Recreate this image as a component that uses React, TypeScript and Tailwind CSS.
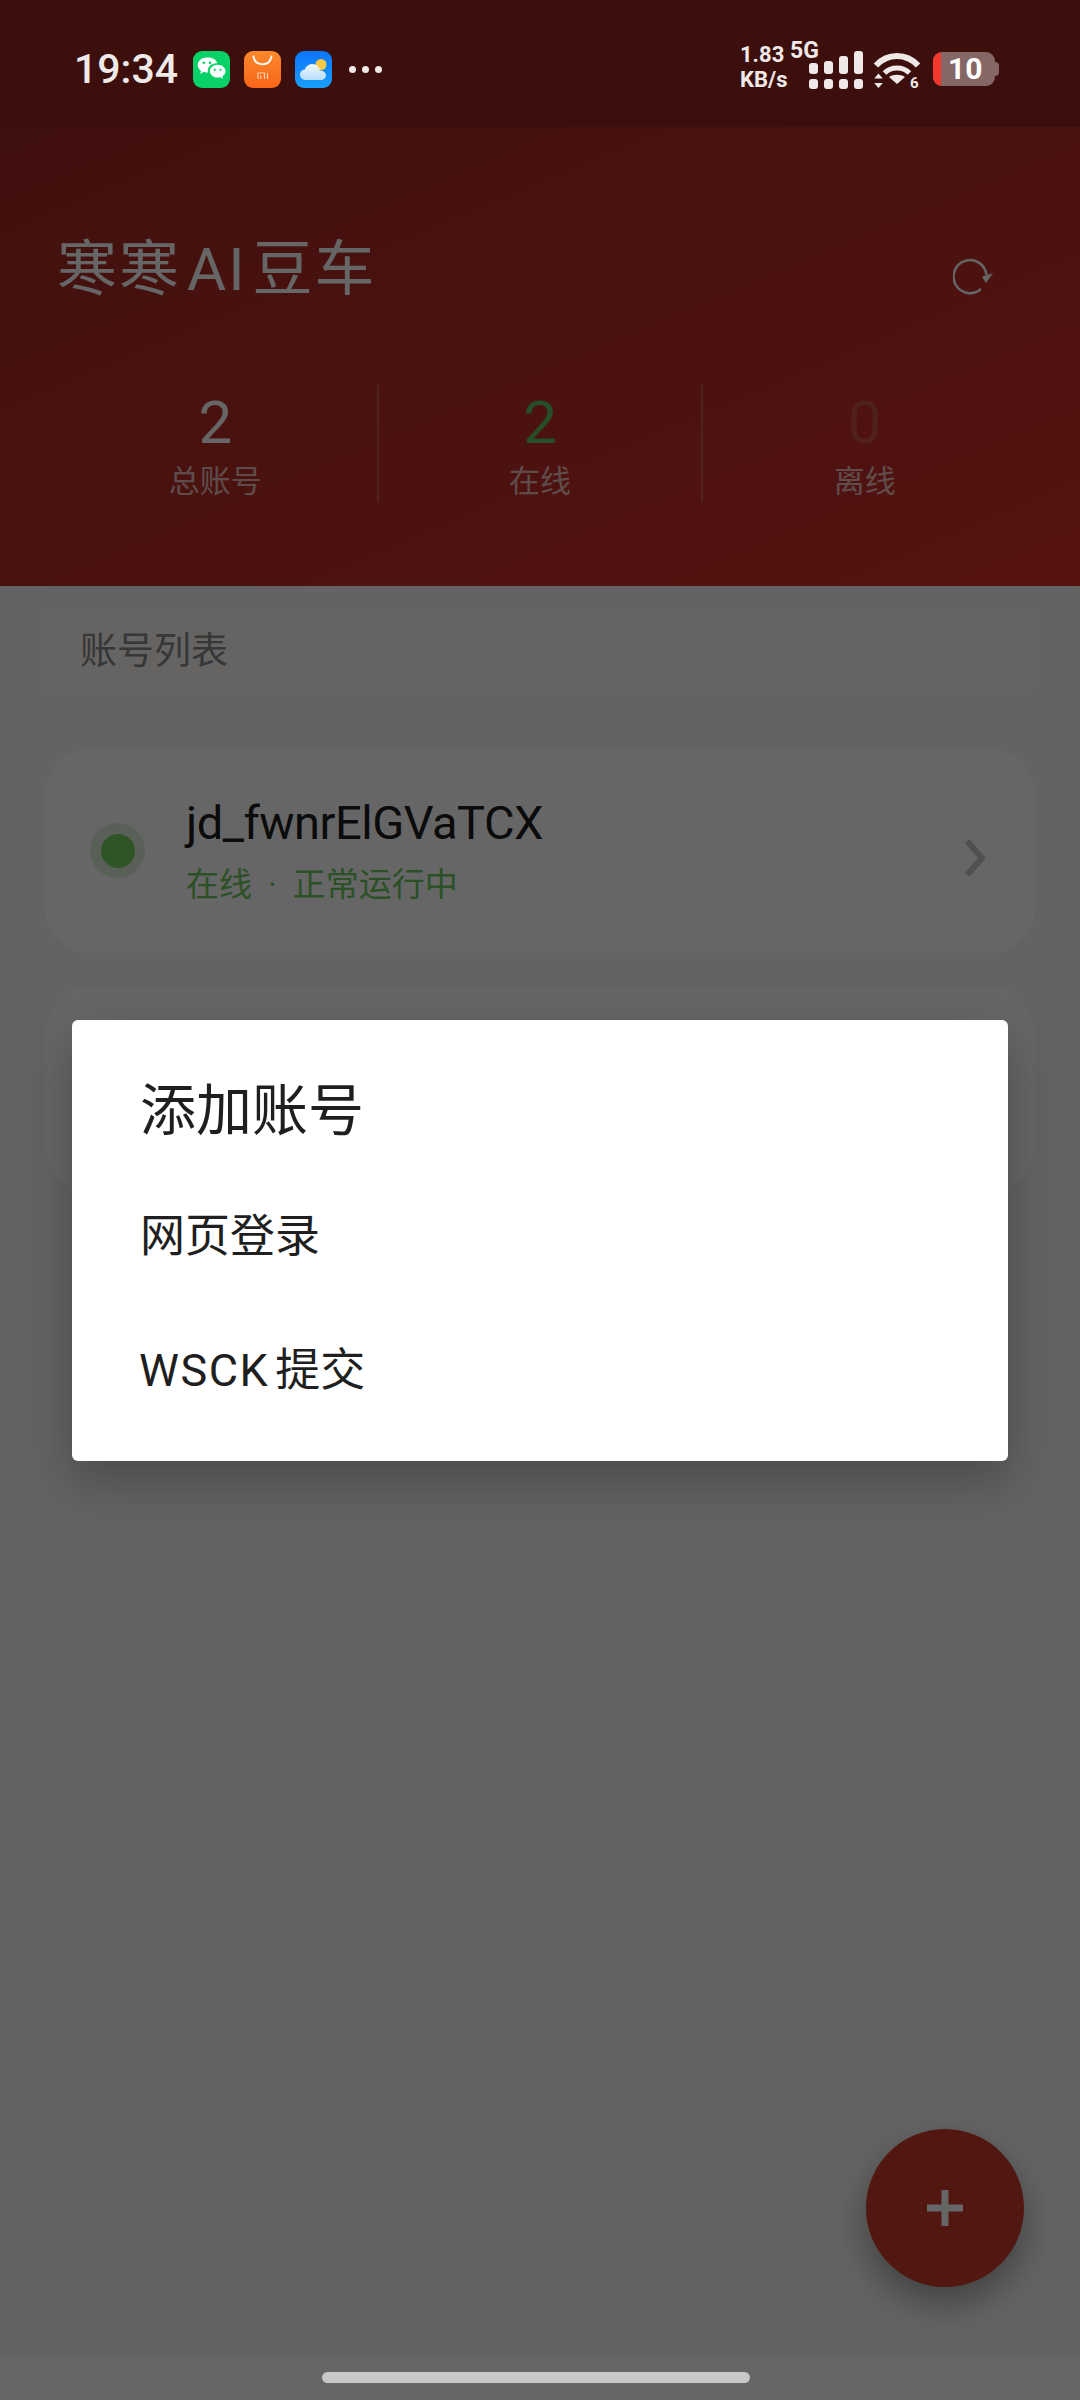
const cjk = "font-['Roboto','Noto_Sans_CJK_SC',sans-serif]";

function WeChatIcon() {
  return (
    <svg width="37" height="37" viewBox="0 0 37 37">
      <rect width="37" height="37" rx="9" fill="#08d267" />
      <path d="M14 6.500c-5.200 0-9.300 3.400-9.300 7.600 0 2.400 1.300 4.400 3.400 5.800l-.9 3 3.300-1.800c1.100.3 2.200.5 3.500.5.400 0 .8 0 1.100-.1-.2-.7-.3-1.300-.3-2 0-4.100 3.900-7.300 8.600-7.300h.9c-.9-3.300-4.600-5.700-9.300-5.700z" fill="#fff" />
      <path d="M32.500 20.200c0-3.500-3.500-6.400-7.800-6.400s-7.800 2.900-7.800 6.400 3.500 6.400 7.800 6.400c.9 0 1.800-.1 2.700-.4l2.700 1.500-.7-2.400c1.900-1.200 3.100-3 3.100-5.100z" fill="#fff" />
      <circle cx="10.800" cy="11.800" r="1.300" fill="#08d267" />
      <circle cx="17" cy="11.800" r="1.300" fill="#08d267" />
      <circle cx="21.800" cy="18.800" r="1.100" fill="#08d267" />
      <circle cx="27.400" cy="18.800" r="1.100" fill="#08d267" />
    </svg>
  );
}

function StoreIcon() {
  return (
    <svg width="37" height="37" viewBox="0 0 37 37">
      <defs>
        <linearGradient id="store" x1="0" y1="0" x2="0" y2="1">
          <stop offset="0" stopColor="#fb8a2c" />
          <stop offset="1" stopColor="#f9651a" />
        </linearGradient>
      </defs>
      <rect width="37" height="37" rx="9" fill="url(#store)" />
      <path d="M9.500 5.500c.8 5 4.400 7.800 9 7.800s8.200-2.800 9-7.800" fill="none" stroke="#fff" strokeWidth="1.800" strokeLinecap="round" />
      <path d="M14 28v-6h6.500v6M16.800 24.500V28M23.500 22v6" fill="none" stroke="#fdd0a8" strokeWidth="1.200" />
    </svg>
  );
}

function WeatherIcon() {
  return (
    <svg width="37" height="37" viewBox="0 0 37 37">
      <defs>
        <linearGradient id="sky" x1="0" y1="0" x2="0" y2="1">
          <stop offset="0" stopColor="#0c74fb" />
          <stop offset="1" stopColor="#19a0fb" />
        </linearGradient>
        <linearGradient id="cloud" x1="0" y1="0" x2="0" y2="1">
          <stop offset="0" stopColor="#f0f6fc" />
          <stop offset="1" stopColor="#b7def9" />
        </linearGradient>
      </defs>
      <rect width="37" height="37" rx="9" fill="url(#sky)" />
      <circle cx="26" cy="13.500" r="5.500" fill="#f9c846" />
      <path d="M10.500 29c-3.200 0-5.500-2.300-5.500-5.200s2.200-5 4.800-5.200c1-3.300 4-5.600 7.500-5.600 3.900 0 7 2.800 7.600 6.400 3-.1 6 1.500 6 4.800 0 3-2.300 4.800-5.200 4.800z" fill="url(#cloud)" />
    </svg>
  );
}

function SignalIcon() {
  const heights = ["h-[11px]", "h-[13px]", "h-[18px]", "h-[23px]"];
  return (
    <div className="flex gap-[6px] items-end">
      {heights.map((h) => (
        <div key={h} className="flex flex-col gap-[5px] items-center">
          <div className={`w-[9px] ${h} rounded-[3px] bg-[#efe9e8]`} />
          <div className="w-[9px] h-[10px] rounded-[3px] bg-[#efe9e8]" />
        </div>
      ))}
    </div>
  );
}

function WifiIcon() {
  return (
    <svg width="46" height="40" viewBox="0 0 46 40" fill="none">
      <path d="M2 12.500C7.500 6.500 15 3 23 3s15.500 3.500 21 9.500" stroke="#efe9e8" strokeWidth="6" />
      <path d="M10.500 20c3.200-3.200 7.500-5 12.500-5s9.300 1.800 12.500 5" stroke="#efe9e8" strokeWidth="5" />
      <path d="M23 31l-8-7c2.200-1.500 5-2.300 8-2.300s5.800.8 8 2.300z" fill="#efe9e8" />
      <path d="M4.500 20.500l4.300 5H.2zM4.500 35l4.300-5H.2z" fill="#efe9e8" />
      <text x="36" y="35" fontSize="15" fontWeight="700" fill="#efe9e8" fontFamily="Roboto, sans-serif">6</text>
    </svg>
  );
}

function Battery() {
  return (
    <div className="flex items-center">
      <div className="relative w-[62px] h-[34px] rounded-[9px] bg-[#856766] overflow-hidden flex items-center">
        <div className="w-[8px] h-full bg-[#f6372e]" />
        <span className="ml-[7px] text-[30px] leading-none font-bold text-white font-['Roboto',sans-serif]">10</span>
      </div>
      <div className="w-[4px] h-[14px] rounded-r-[4px] bg-[#856766]" />
    </div>
  );
}

function StatusBar() {
  return (
    <div className="relative z-30 h-[127px] shrink-0 bg-[#3c0f0c] flex items-start justify-between pl-[74px] pr-[81px] pt-[51px] font-['Roboto',sans-serif] text-[#efe9e8]">
      <div className="flex items-center h-[37px]">
        <span className="text-[41px] font-medium leading-none w-[119px]">19:34</span>
        <div className="flex gap-[14px]">
          <WeChatIcon />
          <StoreIcon />
          <WeatherIcon />
        </div>
        <div className="flex gap-[6px] ml-[17px]">
          <div className="w-[7px] h-[7px] rounded-full bg-[#efe9e8]" />
          <div className="w-[7px] h-[7px] rounded-full bg-[#efe9e8]" />
          <div className="w-[7px] h-[7px] rounded-full bg-[#efe9e8]" />
        </div>
      </div>
      <div className="flex items-start">
        <div className="flex flex-col text-[22px] font-bold leading-[24.5px] -mt-[8px] w-[50px]">
          <span>1.83</span>
          <span>KB/s</span>
        </div>
        <div className="relative w-[72px] h-[38px]">
          <span className="absolute left-0 -top-[12px] text-[23px] font-bold leading-[24px]">5G</span>
          <div className="absolute left-[19px] top-0">
            <SignalIcon />
          </div>
        </div>
        <div className="ml-[12px] mt-[2px]">
          <WifiIcon />
        </div>
        <div className="ml-[13px] mt-[1px]">
          <Battery />
        </div>
      </div>
    </div>
  );
}

function Stat({ value, label, color, border }: { value: string; label: string; color: string; border?: boolean }) {
  return (
    <div className={`flex-1 h-[117px] flex flex-col items-center ${border ? "border-r-2 border-white/20" : ""}`}>
      <span className={`text-[60px] leading-[58px] mt-[9px] font-normal ${color}`}>{value}</span>
      <span className="text-[31px] leading-[36px] mt-[12px] text-white/70">{label}</span>
    </div>
  );
}

function Header() {
  return (
    <div className="h-[459px] shrink-0 bg-gradient-to-br from-[#a02a23] to-[#d4302a] px-[54px]">
      <div className="flex items-start justify-between pt-[107px] -ml-[1px]">
        <h1 className="text-[60px] leading-[72px] tracking-[2px] text-white font-normal ml-[4px]">
          寒寒<span className="mx-[6px]">AI</span>豆车
        </h1>
        <svg className="mt-[24px] mr-[31px]" width="42" height="38" viewBox="0 0 42 38" fill="none" stroke="#fff" strokeWidth="2.500">
          <path d="M28 31A16.500 16.500 0 1 1 33.500 17" />
          <path d="M29 18.700L40 15l-7 10z" fill="#fff" stroke="none" />
        </svg>
      </div>
      <div className="flex mt-[79px]">
        <Stat value="2" label="总账号" color="text-white" border />
        <Stat value="2" label="在线" color="text-[#5fc465]" border />
        <Stat value="0" label="离线" color="text-[#c8504a]" />
      </div>
    </div>
  );
}

function AccountCard({ name, online }: { name: string; online?: boolean }) {
  return (
    <div className="h-[205px] rounded-[46px] bg-white flex items-center pl-[45px] pr-[47px]">
      <div className="w-[55px] h-[55px] rounded-full bg-[#4caf50]/20 flex items-center justify-center shrink-0">
        <div className="w-[34px] h-[34px] rounded-full bg-[#76d462]" />
      </div>
      <div className="ml-[41px] flex-1 -mt-[2px]">
        <div className="text-[47px] leading-[56px] text-[#1c1c1c] tracking-[-0.5px]">{name}</div>
        <div className="text-[33px] leading-[40px] mt-[14px] text-[#6fc85c]">
          {online && (
            <>
              在线<span className="mx-[16px]">·</span>正常运行中
            </>
          )}
        </div>
      </div>
      <svg className="mt-[15px]" width="24" height="36" viewBox="0 0 24 36" fill="none" stroke="#c8c8c8" strokeWidth="6">
        <path d="M3 1l15 17L3 35" />
      </svg>
    </div>
  );
}

export default function App() {
  return (
    <div className={`relative w-[1080px] h-[2400px] overflow-hidden flex flex-col bg-[#f8f8f8] ${cjk}`}>
      <StatusBar />
      <Header />

      <div className="px-[45px] pt-[24px]">
        <div className="h-[83px] rounded-[12px] bg-[#fdf9f8] flex items-center pl-[35px] text-[37px] text-[#8a8a8a]">
          账号列表
        </div>
        <div className="flex flex-col gap-[34px] mt-[55px]">
          <AccountCard name="jd_fwnrElGVaTCX" online />
          <AccountCard name="" />
        </div>
      </div>

      {/* nav bar strip */}
      <div className="mt-auto h-[45px] shrink-0 bg-white" />

      {/* FAB */}
      <button className="absolute left-[866px] top-[2129px] w-[158px] h-[158px] rounded-full bg-[#cb3a2a] shadow-[0_16px_36px_rgba(0,0,0,0.35)] flex items-center justify-center">
        <svg width="36" height="36" viewBox="0 0 36 36" fill="#fff">
          <rect x="14.500" width="7" height="36" />
          <rect y="14.500" width="36" height="7" />
        </svg>
      </button>

      {/* Scrim */}
      <div className="absolute inset-0 z-10 bg-black/60" />

      {/* Dialog */}
      <div className="absolute z-20 left-[72px] top-[1020px] w-[936px] h-[441px] bg-white rounded-[6px] shadow-[0_20px_50px_rgba(0,0,0,0.25)] pl-[68px] text-[#1f1f1f]">
        <h2 className="text-[56px] leading-[64px] mt-[59px] font-normal">添加账号</h2>
        <p className="text-[45px] leading-[52px] mt-[68px]">网页登录</p>
        <p className="text-[45px] leading-[52px] mt-[82px] -ml-[1px]">
          <span className="tracking-[1.5px]">WSCK</span>
          <span className="ml-[6px]">提交</span>
        </p>
      </div>

      {/* Home indicator */}
      <div className="absolute z-30 left-[322px] top-[2372px] w-[428px] h-[11px] rounded-full bg-[#c8c8c8]" />
    </div>
  );
}
